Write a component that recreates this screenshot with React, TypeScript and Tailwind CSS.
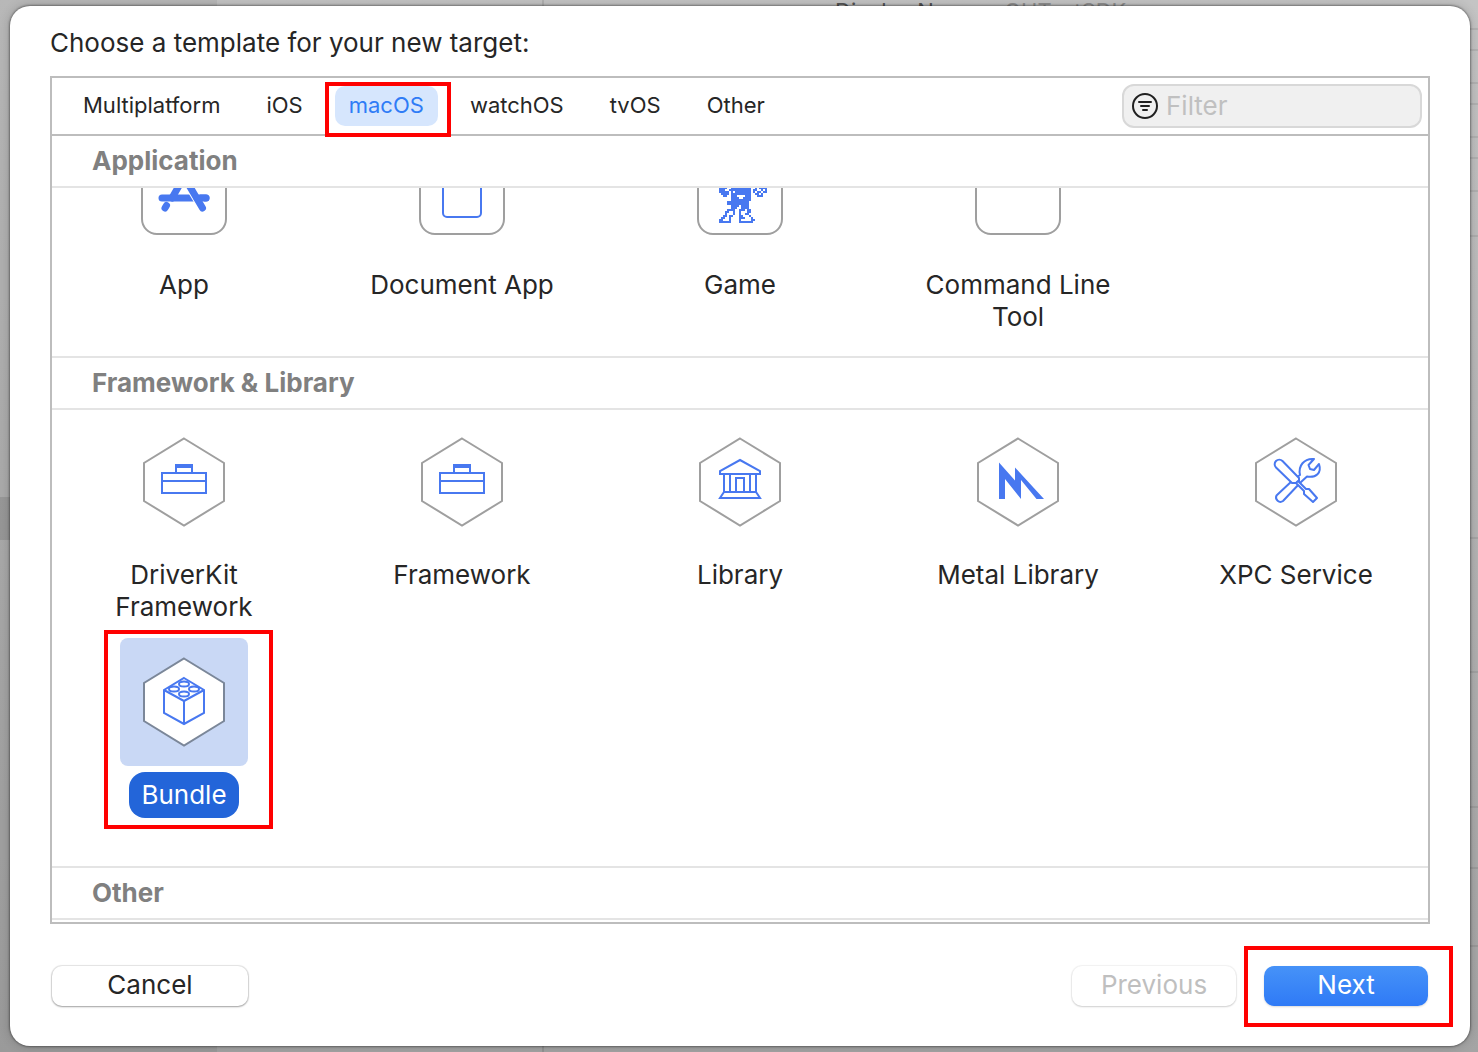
import type { ReactNode } from "react";

const BLUE = "#4878f0";

const SPRITE = [
  "####..##########..#.####",
  "###..###########.##..#.#",
  "#####.#.########.#.##.##",
  ".####.##########..##.#..",
  "..##..###....###...###..",
  "......####..####........",
  "......##########........",
  "....###########.........",
  "....###########.........",
  "......####.####.........",
  "......###..####.........",
  "....####..###.##........",
  "...##..#..#...##........",
  "...#...#..#..##.........",
  "..##.##...##...#........",
  ".##..#....###...#.......",
  "##...#....#.....##......",
  "######....#######.......",
];

function Square({ children }: { children?: ReactNode }) {
  return (
    <svg viewBox="-64 -64 128 128" className="h-32 w-32" aria-hidden="true">
      <rect x="-42" y="-42" width="84" height="84" rx="15" fill="#fff" stroke="#9f9f9f" strokeWidth="2" />
      {children}
    </svg>
  );
}

function Hexagon({ children, stroke = "#9f9f9f" }: { children?: ReactNode; stroke?: string }) {
  return (
    <svg viewBox="-64 -64 128 128" className="h-32 w-32" aria-hidden="true">
      <path d="M0-43.500 40-19V19L0 43.500-40 19V-19Z" fill="#fff" stroke={stroke} strokeWidth="2" />
      <g fill="none" stroke={BLUE} strokeWidth="2">
        {children}
      </g>
    </svg>
  );
}

function AppIcon() {
  return (
    <Square>
      <g fill="none" stroke={BLUE} strokeWidth="7" strokeLinecap="round">
        <path d="M4-22-12 6" />
        <path d="M-22 6H22" />
        <path d="M-17.500 13.500-19 16" />
        <path d="M-4-22 18.500 16" stroke="#fff" strokeWidth="9" strokeLinecap="butt" />
        <path d="M13 6H22" />
        <path d="M-4-22 18.500 16" />
      </g>
    </Square>
  );
}

function DocumentIcon() {
  return (
    <Square>
      <rect x="-19" y="-26" width="38" height="51" rx="4" fill="none" stroke={BLUE} strokeWidth="2" />
    </Square>
  );
}

function GameIcon() {
  return (
    <Square>
      <g fill={BLUE} shapeRendering="crispEdges">
        {SPRITE.map((row, y) =>
          row.split("").map((c, x) =>
            c === "#" ? <rect key={`${x}-${y}`} x={-21 + x * 2} y={-5 + y * 2} width="2" height="2" /> : null,
          ),
        )}
      </g>
    </Square>
  );
}

function ToolboxIcon() {
  return (
    <Hexagon>
      <rect x="-22" y="-9" width="44" height="20" />
      <path d="M-22-1H22M-8-10V-17M8-10V-17" />
      <path d="M-9-16H9" strokeWidth="4" />
    </Hexagon>
  );
}

function LibraryIcon() {
  return (
    <Hexagon>
      <path d="M0-22 20-11V-8H-20V-11Z" />
      <path d="M-16-8V10M-10-8V10M10-8V10M16-8V10" />
      <path d="M-4 10V-4H4V10" />
      <path d="M-16 10H16L20 16H-20Z" />
    </Hexagon>
  );
}

function MetalIcon() {
  return (
    <Hexagon>
      <path d="M-19-19.500-3-1.500V-14.500L26 17H18.500L3-2V17L-13-3V17H-19Z" fill={BLUE} stroke="none" />
    </Hexagon>
  );
}

function ToolsIcon() {
  return (
    <Hexagon>
      <path d="M-19.500 13.500-3-2 4-7C2-16 8-24 18-23L12.500-17 14-13 18-12 23-18C26-9 20-4 11-5.500L5 0-13 19A4.400 4.400 0 0 1-19.500 13.500Z" strokeLinejoin="round" />
      <path d="M-20-14.500A4.400 4.400 0 0 1-13.500-21L3-4V-1L0 1H-4Z" fill="#fff" strokeLinejoin="round" />
      <path d="M2-1 10 7 13 7 21 16 17 20 8 12V9L0 1Z" fill="#fff" strokeWidth="2" strokeLinejoin="round" />
    </Hexagon>
  );
}

function BrickIcon() {
  return (
    <Hexagon stroke="#7b8799">
      <path d="M0-24 20-12V11L0 22-20 11V-12Z" />
      <path d="M-20-12 0-1 20-12M0-1V22" />
      <ellipse cx="0" cy="-18" rx="5" ry="2.500" />
      <ellipse cx="-10" cy="-13" rx="5" ry="2.500" />
      <ellipse cx="10" cy="-13" rx="5" ry="2.500" />
      <ellipse cx="0" cy="-8" rx="5" ry="2.500" />
    </Hexagon>
  );
}

function Highlight({ className }: { className: string }) {
  return <span aria-hidden="true" className={`pointer-events-none absolute z-20 border-4 border-[#ff0000] ${className}`} />;
}

function Template({ label, icon, selected = false }: { label: string; icon: ReactNode; selected?: boolean }) {
  return (
    <button type="button" aria-pressed={selected} className="relative flex min-h-[212px] flex-col items-center">
      <span className={selected ? "rounded-lg bg-[#c9d8f5]" : "rounded-lg"}>{icon}</span>
      <span
        className={
          selected
            ? "mt-1.5 rounded-2xl bg-[#2365d9] px-3 py-[7px] text-white"
            : "mt-1.5 px-1 py-[7px]"
        }
      >
        {label}
      </span>
      {selected && <Highlight className="-top-2 left-5 h-[199px] w-[169px]" />}
    </button>
  );
}

function SectionTitle({ children }: { children: ReactNode }) {
  return (
    <h2 className="relative z-10 border-b-2 border-[#e4e4e4] bg-white px-10 py-[9px] font-bold text-[#808080] [font-optical-sizing:none]">
      {children}
    </h2>
  );
}

const GRID = "grid grid-cols-[repeat(5,200px)] justify-between gap-y-2 px-8 pb-4";

const TABS = ["Multiplatform", "iOS", "macOS", "watchOS", "tvOS", "Other"];

const ROWS = [
  "h-[30px]", "h-[21px]", "h-[33px]", "h-[21px]", "h-[33px]", "h-[21px]", "h-[33px]", "h-[45px]",
  "h-[302px]", "h-[134px]", "h-[135px]", "h-[61px]", "h-[78px]",
];

function Backdrop() {
  return (
    <div
      aria-hidden="true"
      className="absolute inset-0 grid grid-cols-[217px_327px_1fr] overflow-hidden bg-linear-to-b from-[#c4c4c4] via-[#b4b4b4] to-[#a4a4a4]"
    >
      <div className="bg-black/6 pt-[497px]">
        <div className="h-[43px] bg-black/10" />
      </div>
      <div className="border-r-2 border-black/10" />
      <div className="relative">
        {ROWS.map((h, i) => (
          <div key={i} className={`border-b-2 border-black/8 ${h}`} />
        ))}
        <div className="absolute -top-[3px] left-[291px] flex gap-[26px] text-[22px] leading-7 text-[#555]">
          <span>Display Name</span>
          <span className="text-[#909090]">QHTestSDK</span>
        </div>
      </div>
    </div>
  );
}

export default function App() {
  return (
    <div className="relative min-h-screen pt-1.5 pr-2 pb-1.5 pl-2.5 font-['Inter',sans-serif] text-[26px] leading-8 text-[#262626]">
      <Backdrop />
      <main className="relative rounded-[20px] bg-white px-10 pt-[21px] pb-10 shadow-[0_0_2px_1px_rgba(0,0,0,0.35),0_0_12px_rgba(0,0,0,0.2)]">
        <h1>Choose a template for your new target:</h1>

        <section className="mt-[17px] border-2 border-[#bdbdbd] pb-0.5">
          <div className="flex items-center justify-between border-b-2 border-[#bdbdbd] py-1.5 pr-1.5 pl-[17px]">
            <nav className="flex gap-[18px]" aria-label="Platform">
              {TABS.map((tab) => (
                <button
                  key={tab}
                  type="button"
                  className={
                    tab === "macOS"
                      ? "relative rounded-[10px] bg-[#d6e6fd] px-3.5 pt-[3px] pb-[5px] text-[22px] text-[#2f7cf6]"
                      : "px-3.5 pt-[3px] pb-[5px] text-[22px]"
                  }
                >
                  {tab}
                  {tab === "macOS" && <Highlight className="-top-1 -right-[13px] -bottom-[11px] -left-2.5" />}
                </button>
              ))}
            </nav>
            <label className="flex w-[300px] items-center gap-2 rounded-xl border-2 border-[#d8d8d8] bg-[#f0f0f0] px-2 py-1">
              <svg viewBox="0 0 26 26" className="h-[26px] w-[26px] shrink-0" fill="none" stroke="#202020" strokeWidth="2" strokeLinecap="round" aria-hidden="true">
                <circle cx="13" cy="13" r="12" />
                <path d="M7 9H19M9 13H17M11 17H15" />
              </svg>
              <input
                type="text"
                aria-label="Filter"
                placeholder="Filter"
                className="w-full min-w-0 bg-transparent outline-none placeholder:text-[#c0c0c0]"
              />
            </label>
          </div>

          <SectionTitle>Application</SectionTitle>
          <div className="overflow-hidden">
            <div className={`-mt-[60px] ${GRID}`}>
              <Template label="App" icon={<AppIcon />} />
              <Template label="Document App" icon={<DocumentIcon />} />
              <Template label="Game" icon={<GameIcon />} />
              <Template label="Command Line Tool" icon={<Square />} />
            </div>
          </div>

          <div className="border-t-2 border-[#e4e4e4]">
            <SectionTitle>Framework &amp; Library</SectionTitle>
            <div className={`pt-2 ${GRID}`}>
              <Template label="DriverKit Framework" icon={<ToolboxIcon />} />
              <Template label="Framework" icon={<ToolboxIcon />} />
              <Template label="Library" icon={<LibraryIcon />} />
              <Template label="Metal Library" icon={<MetalIcon />} />
              <Template label="XPC Service" icon={<ToolsIcon />} />
              <Template label="Bundle" icon={<BrickIcon />} selected />
            </div>
          </div>

          <div className="border-t-2 border-[#e4e4e4]">
            <SectionTitle>Other</SectionTitle>
          </div>
        </section>

        <footer className="mt-[42px] flex items-center px-0.5">
          <button type="button" className="w-[196px] rounded-[10px] bg-white pt-[3px] pb-[5px] shadow-[0_0_1px_1px_rgba(0,0,0,0.1),0_1px_2px_rgba(0,0,0,0.3)]">
            Cancel
          </button>
          <button type="button" disabled className="ml-auto w-[164px] rounded-[10px] bg-white pt-[3px] pb-[5px] text-[#bfbfbf] shadow-[0_0_1px_1px_rgba(0,0,0,0.05),0_1px_2px_rgba(0,0,0,0.15)]">
            Previous
          </button>
          <button type="button" className="relative ml-7 w-[164px] rounded-[10px] bg-linear-to-b from-[#4692f8] to-[#2f7af6] pt-[3px] pb-[5px] text-white shadow-[0_1px_2px_rgba(0,0,0,0.15)]">
            Next
            <Highlight className="-top-5 -right-[25px] -bottom-[21px] -left-5" />
          </button>
        </footer>
      </main>
    </div>
  );
}
